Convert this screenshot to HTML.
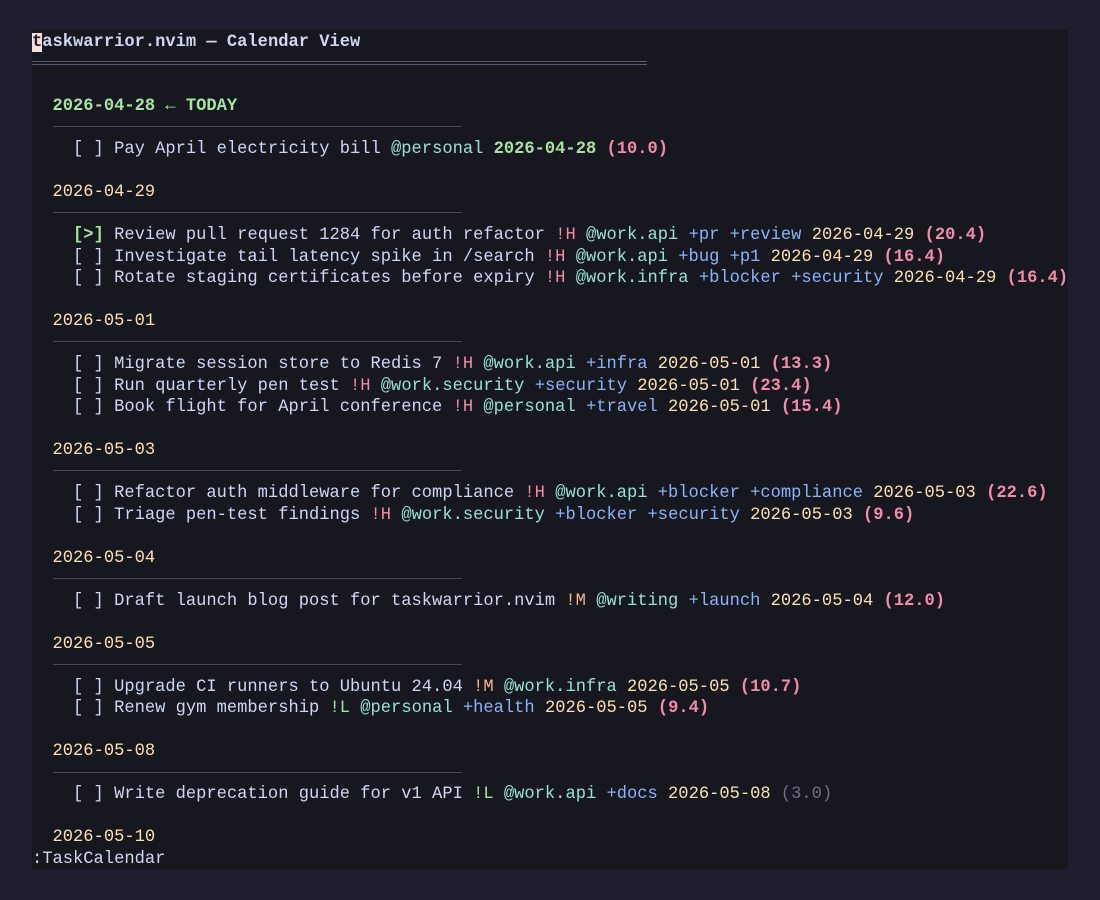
<!DOCTYPE html>
<html><head><meta charset="utf-8"><style>
html,body{margin:0;padding:0;background:#1e1e2e;width:1100px;height:900px;overflow:hidden}
#p{position:absolute;left:32px;top:30px;width:1036px;height:839px;background:#17171f}
pre{position:absolute;left:32px;top:31.5px;margin:0;font-family:"Liberation Mono",monospace;font-size:17.1px;line-height:21.5px;color:#cdd6f4;white-space:pre}
.b{font-weight:bold}
.g{color:#a6e3a1}.y{color:#f9e2af}.r{color:#f38ba8}.o{color:#fab387}.t{color:#94e2d5}.bl{color:#89b4fa}.u{color:#f38ba8;font-weight:bold}.d{color:#6c7086}
.cur{background:#f5e0dc;color:#1e1e2e}
.rule{position:absolute;left:53px;width:409px;height:0;border-top:1px solid #45475a}
.dr{position:absolute;left:32px;top:61px;width:615px;height:2px;border-top:1px solid #585b70;border-bottom:1px solid #585b70}
</style></head><body>
<div id="p"></div>
<div class="dr"></div>
<div class="rule" style="top:126px"></div>
<div class="rule" style="top:212px"></div>
<div class="rule" style="top:341px"></div>
<div class="rule" style="top:470px"></div>
<div class="rule" style="top:578px"></div>
<div class="rule" style="top:664px"></div>
<div class="rule" style="top:772px"></div>
<pre><span class="b"><span class="cur">t</span>askwarrior.nvim — Calendar View</span>


  <span class="g b">2026-04-28 ← TODAY</span>

    [ ] Pay April electricity bill <span class="t">@personal</span> <span class="g b">2026-04-28</span> <span class="u">(10.0)</span>

  <span class="y">2026-04-29</span>

    <span class="g b">[&gt;]</span> Review pull request 1284 for auth refactor <span class="r">!H</span> <span class="t">@work.api</span> <span class="bl">+pr</span> <span class="bl">+review</span> <span class="y">2026-04-29</span> <span class="u">(20.4)</span>
    [ ] Investigate tail latency spike in /search <span class="r">!H</span> <span class="t">@work.api</span> <span class="bl">+bug</span> <span class="bl">+p1</span> <span class="y">2026-04-29</span> <span class="u">(16.4)</span>
    [ ] Rotate staging certificates before expiry <span class="r">!H</span> <span class="t">@work.infra</span> <span class="bl">+blocker</span> <span class="bl">+security</span> <span class="y">2026-04-29</span> <span class="u">(16.4)</span>

  <span class="y">2026-05-01</span>

    [ ] Migrate session store to Redis 7 <span class="r">!H</span> <span class="t">@work.api</span> <span class="bl">+infra</span> <span class="y">2026-05-01</span> <span class="u">(13.3)</span>
    [ ] Run quarterly pen test <span class="r">!H</span> <span class="t">@work.security</span> <span class="bl">+security</span> <span class="y">2026-05-01</span> <span class="u">(23.4)</span>
    [ ] Book flight for April conference <span class="r">!H</span> <span class="t">@personal</span> <span class="bl">+travel</span> <span class="y">2026-05-01</span> <span class="u">(15.4)</span>

  <span class="y">2026-05-03</span>

    [ ] Refactor auth middleware for compliance <span class="r">!H</span> <span class="t">@work.api</span> <span class="bl">+blocker</span> <span class="bl">+compliance</span> <span class="y">2026-05-03</span> <span class="u">(22.6)</span>
    [ ] Triage pen-test findings <span class="r">!H</span> <span class="t">@work.security</span> <span class="bl">+blocker</span> <span class="bl">+security</span> <span class="y">2026-05-03</span> <span class="u">(9.6)</span>

  <span class="y">2026-05-04</span>

    [ ] Draft launch blog post for taskwarrior.nvim <span class="o">!M</span> <span class="t">@writing</span> <span class="bl">+launch</span> <span class="y">2026-05-04</span> <span class="u">(12.0)</span>

  <span class="y">2026-05-05</span>

    [ ] Upgrade CI runners to Ubuntu 24.04 <span class="o">!M</span> <span class="t">@work.infra</span> <span class="y">2026-05-05</span> <span class="u">(10.7)</span>
    [ ] Renew gym membership <span class="g">!L</span> <span class="t">@personal</span> <span class="bl">+health</span> <span class="y">2026-05-05</span> <span class="u">(9.4)</span>

  <span class="y">2026-05-08</span>

    [ ] Write deprecation guide for v1 API <span class="g">!L</span> <span class="t">@work.api</span> <span class="bl">+docs</span> <span class="y">2026-05-08</span> <span class="d">(3.0)</span>

  <span class="y">2026-05-10</span>
:TaskCalendar</pre>
</body></html>
